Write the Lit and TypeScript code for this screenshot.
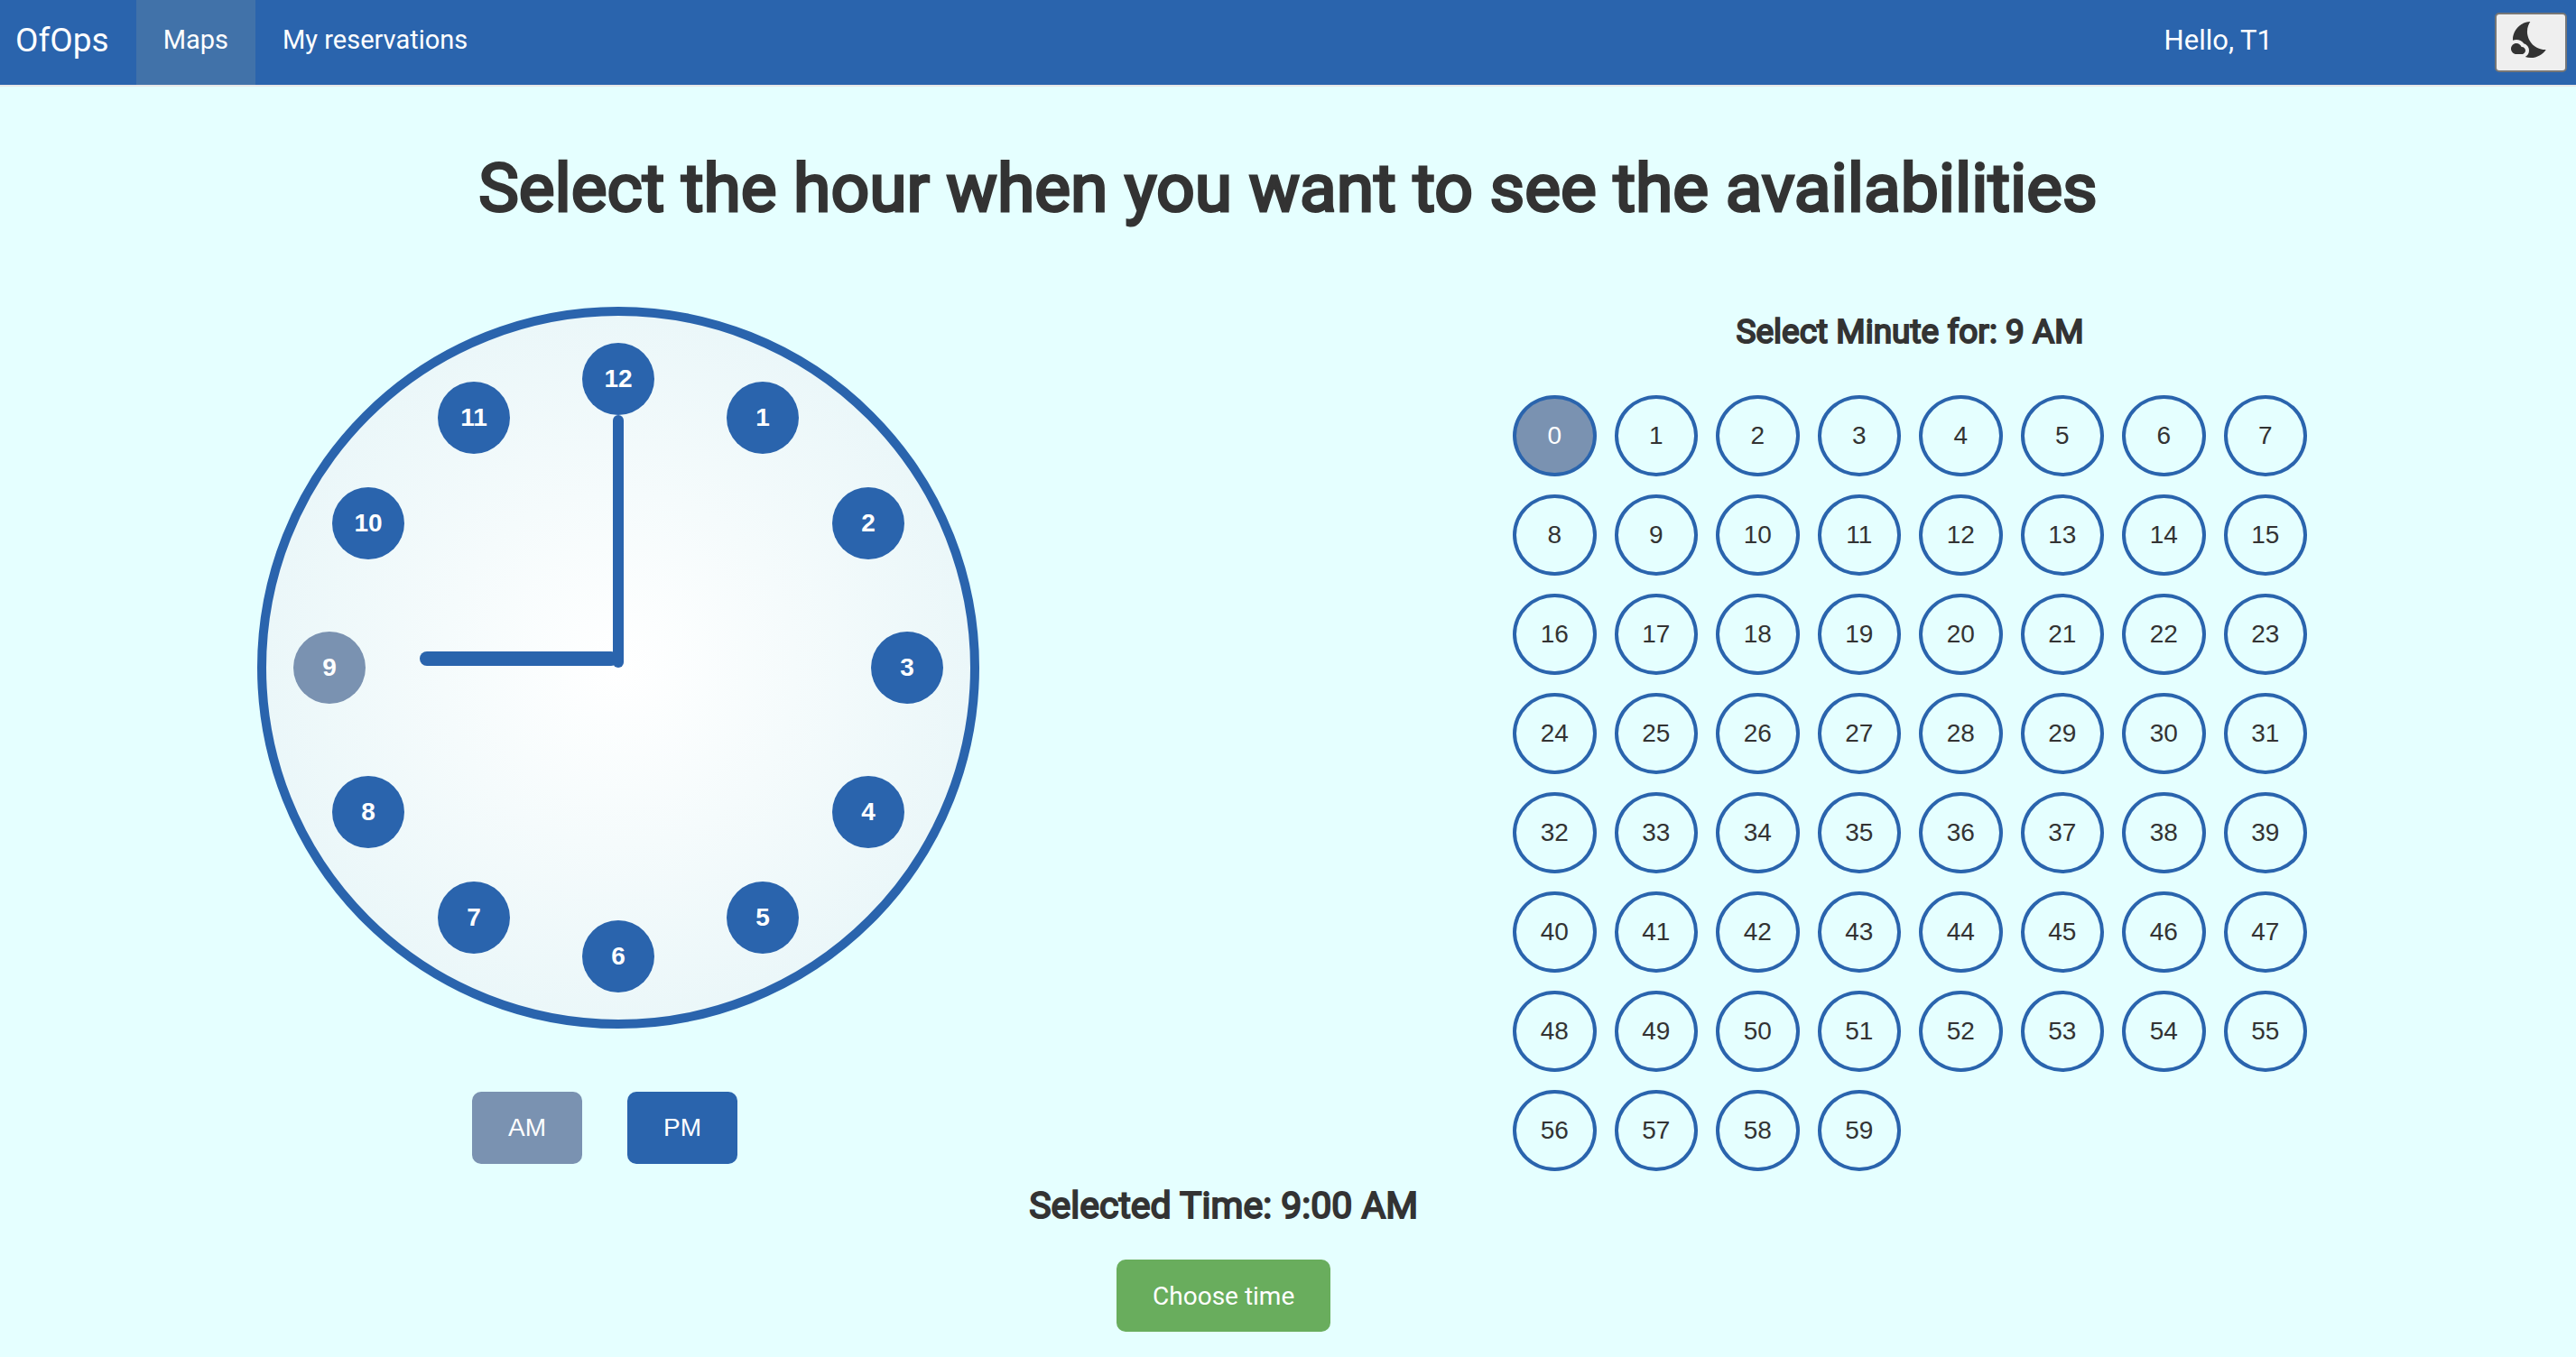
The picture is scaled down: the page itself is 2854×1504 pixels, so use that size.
import { LitElement, html, css } from "lit";
import { customElement, state } from "lit/decorators.js";
import { classMap } from "lit/directives/class-map.js";
import { styleMap } from "lit/directives/style-map.js";

const HOURS = Array.from({ length: 12 }, (_, i) => i + 1);
const MINUTES = Array.from({ length: 60 }, (_, i) => i);

@customElement("ofops-navbar")
class OfopsNavbar extends LitElement {
  static styles = css`
    :host {
      display: block;
    }
    .bar {
      display: flex;
      height: 94px;
      background: #2a64ad;
      border-bottom: 2px solid #e7e7e7;
      color: #fff;
      font-size: 29px;
    }
    .brand,
    .link,
    .hello {
      display: flex;
      align-items: center;
      padding-bottom: 6px;
      color: inherit;
      text-decoration: none;
    }
    .brand {
      padding-left: 17px;
      padding-right: 30px;
      font-size: 37px;
    }
    .link {
      padding-left: 30px;
      padding-right: 30px;
    }
    .active {
      background: #4172a9;
    }
    .hello {
      margin-left: auto;
      margin-right: 246px;
      font-size: 31px;
    }
    .theme {
      box-sizing: border-box;
      align-self: center;
      width: 80px;
      height: 66px;
      margin-right: 10px;
      padding: 4px 14px 10px;
      border: 2px solid #767676;
      border-radius: 5px;
      background: #efefef;
      color: #333;
      cursor: pointer;
    }
    .moon {
      display: block;
      width: 48px;
      height: 48px;
    }
  `;

  render() {
    return html`
      <nav class="bar" aria-label="Main">
        <a class="brand" href="#home">OfOps</a>
        <a class="link active" href="#maps" aria-current="page">Maps</a>
        <a class="link" href="#reservations">My reservations</a>
        <span class="hello">Hello, T1</span>
        <button class="theme" type="button" aria-label="Toggle dark theme">
          <svg class="moon" viewBox="0 0 24 24" fill="currentColor" aria-hidden="true">
            <path d="M11.1 12.08c-2.33-4.51-.5-8.48.53-10.07C6.27 2.2 1.98 6.59 1.98 12c0 .14.02.28.02.42.62-.27 1.29-.42 2-.42 1.66 0 3.18.83 4.1 2.15C9.77 14.63 11 16.17 11 18c0 1.52-.87 2.83-2.12 3.51.98.32 2.03.5 3.11.5 3.5 0 6.58-1.8 8.37-4.52-2.36.23-6.98-.97-9.26-5.41z" />
            <path d="M7 16h-.18C6.4 14.84 5.3 14 4 14c-1.66 0-3 1.34-3 3s1.34 3 3 3h3c1.1 0 2-.9 2-2s-.9-2-2-2z" />
          </svg>
        </button>
      </nav>
    `;
  }
}

@customElement("app-root")
class AppRoot extends LitElement {
  @state() private hour = 9;
  @state() private minute = 0;
  @state() private period = "AM";

  static styles = css`
    :host {
      display: block;
      box-sizing: border-box;
      min-height: 100vh;
      background: #e5ffff;
      color: #333;
      font-family: Roboto, "Liberation Sans", sans-serif;
      font-size: 28px;
    }
    button {
      font-family: "Liberation Sans", Arial, sans-serif;
      font-size: 28px;
      cursor: pointer;
    }
    .title,
    .subtitle,
    .selected {
      margin: 0;
      font-weight: 400;
      text-align: center;
      -webkit-text-stroke-color: currentColor;
    }
    .title {
      padding: 68px 0 88px;
      font-size: 75px;
      line-height: 88px;
      -webkit-text-stroke-width: 3px;
    }
    .subtitle {
      font-size: 37px;
      line-height: 44px;
      -webkit-text-stroke-width: 2px;
    }
    .selected {
      font-size: 41px;
      line-height: 50px;
      -webkit-text-stroke-width: 2px;
    }
    .pickers {
      display: flex;
      justify-content: space-between;
      align-items: flex-start;
      padding-left: 285px;
      padding-right: 298px;
    }
    .hours {
      display: flex;
      flex-direction: column;
      align-items: center;
      gap: 70px;
    }
    .clock {
      position: relative;
      box-sizing: border-box;
      width: 800px;
      height: 800px;
      border: 10px solid #2a64ad;
      border-radius: 50%;
      background: radial-gradient(closest-side, #fff, #ebf7f9);
    }
    .hour {
      position: absolute;
      width: 80px;
      height: 80px;
      padding: 0;
      border: 0;
      border-radius: 50%;
      transform: translate(-50%, -50%);
      background: #2a64ad;
      color: #fff;
      font-weight: 700;
    }
    .hand {
      position: absolute;
      left: 50%;
      bottom: 50%;
      background: #2a64ad;
    }
    .minute-hand {
      width: 12px;
      height: 280px;
      margin-left: -6px;
      border-radius: 6px;
      transform-origin: 50% 100%;
    }
    .hour-hand {
      width: 16px;
      height: 220px;
      margin-bottom: 10px;
      margin-left: -8px;
      border-radius: 8px;
      transform-origin: 50% 100%;
    }
    .periods {
      display: flex;
      gap: 50px;
      padding-right: 30px;
    }
    .period,
    .choose {
      height: 80px;
      padding: 0 40px;
      border: 0;
      border-radius: 10px;
      background: #2a64ad;
      color: #fff;
    }
    .choose {
      background: #69ad5d;
      font-family: Roboto, "Liberation Sans", sans-serif;
    }
    .minutes {
      display: flex;
      flex-direction: column;
      gap: 48px;
      padding-top: 6px;
    }
    .grid {
      display: grid;
      grid-template-columns: repeat(8, 1fr);
      gap: 20px;
      width: 880px;
    }
    .minute {
      height: 90px;
      padding: 0;
      border: 4px solid #2a64ad;
      border-radius: 50%;
      background: transparent;
      color: #333;
    }
    .hour.on,
    .period.on,
    .minute.on {
      background: #7a92b1;
      color: #fff;
    }
    .summary {
      display: flex;
      flex-direction: column;
      align-items: center;
      gap: 35px;
      width: 95%;
      padding-top: 13px;
    }
  `;

  private renderHour(h: number) {
    const angle = (h * Math.PI) / 6;
    const place = {
      left: `calc(50% + ${Math.round(320 * Math.sin(angle))}px)`,
      top: `calc(50% - ${Math.round(320 * Math.cos(angle))}px)`,
    };
    return html`<button
      type="button"
      class=${classMap({ hour: true, on: h === this.hour })}
      style=${styleMap(place)}
      aria-pressed=${h === this.hour}
      @click=${() => (this.hour = h)}
    >${h}</button>`;
  }

  private renderPeriod(p: string) {
    return html`<button
      type="button"
      class=${classMap({ period: true, on: p === this.period })}
      aria-pressed=${p === this.period}
      @click=${() => (this.period = p)}
    >${p}</button>`;
  }

  private renderMinute(m: number) {
    return html`<button
      type="button"
      class=${classMap({ minute: true, on: m === this.minute })}
      aria-pressed=${m === this.minute}
      @click=${() => (this.minute = m)}
    >${m}</button>`;
  }

  render() {
    const time = `${this.hour}:${String(this.minute).padStart(2, "0")} ${this.period}`;
    return html`
      <ofops-navbar></ofops-navbar>
      <main>
        <h1 class="title">Select the hour when you want to see the availabilities</h1>
        <div class="pickers">
          <section class="hours" aria-label="Hour">
            <div class="clock">
              <div class="hand hour-hand" style=${styleMap({ transform: `rotate(${this.hour * 30}deg)` })}></div>
              <div class="hand minute-hand" style=${styleMap({ transform: `rotate(${this.minute * 6}deg)` })}></div>
              ${HOURS.map((h) => this.renderHour(h))}
            </div>
            <div class="periods">${["AM", "PM"].map((p) => this.renderPeriod(p))}</div>
          </section>
          <section class="minutes" aria-label="Minute">
            <h3 class="subtitle">Select Minute for: ${this.hour} ${this.period}</h3>
            <div class="grid">${MINUTES.map((m) => this.renderMinute(m))}</div>
          </section>
        </div>
        <div class="summary">
          <h2 class="selected">Selected Time: ${time}</h2>
          <button class="choose" type="button">Choose time</button>
        </div>
      </main>
    `;
  }
}
